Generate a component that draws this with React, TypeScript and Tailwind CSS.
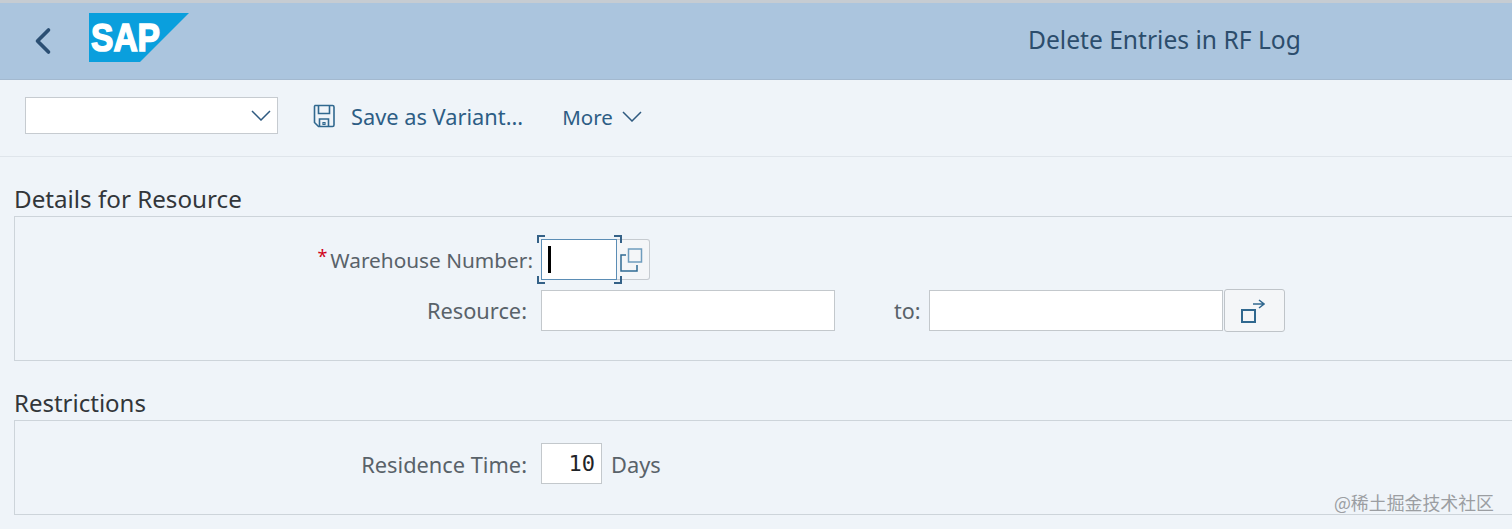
import { ChevronLeft } from 'lucide-react';

const FONT = "font-['Noto_Sans','Liberation_Sans',sans-serif]";

function SapLogo() {
  return (
    <svg width="100" height="49" viewBox="0 0 100 49" aria-label="SAP">
      <polygon points="0,0 100,0 51,49 0,49" fill="#0a9fdd" />
      <text
        x="2"
        y="38"
        fill="#fff"
        stroke="#fff"
        strokeWidth="1.600"
        fontFamily="'Liberation Sans', sans-serif"
        fontWeight="700"
        fontSize="39"
        textLength="69"
        lengthAdjust="spacingAndGlyphs"
      >
        SAP
      </text>
    </svg>
  );
}

function Chevron() {
  return (
    <svg width="20" height="11" viewBox="0 0 20 11" fill="none" stroke="#2f5a80" strokeWidth="1.500">
      <path d="M1 1l9 9 9-9" />
    </svg>
  );
}

function SaveIcon() {
  return (
    <svg width="24" height="24" viewBox="0 0 24 24" fill="none" stroke="#30688f" strokeWidth="1.600">
      <path d="M3.500 1.500h17a1.500 1.500 0 0 1 1.500 1.500v18a1.500 1.500 0 0 1-1.500 1.500h-14l-4-4v-15.500a1.500 1.500 0 0 1 .5-1.500z" />
      <path d="M6.500 1.500v8h11v-8" />
      <path d="M7.500 22.500v-7.500h9v7.500" />
      <path d="M11 18.500h2v2h-2z" strokeWidth="1.200" />
    </svg>
  );
}

function CopyIcon() {
  return (
    <svg width="24" height="24" viewBox="0 0 24 24" fill="none" strokeWidth="1.500">
      <path d="M8.500 1h13v13h-13z" stroke="#6f9dbd" />
      <path d="M6 7H1v16h16v-6" stroke="#2f6b93" />
    </svg>
  );
}

function MultiSelectIcon() {
  return (
    <svg width="24" height="24" viewBox="0 0 24 24" fill="none">
      <path d="M1 11h13v12H1z" stroke="#30688f" strokeWidth="2" />
      <path d="M12 5h11M18 1l5 4-5 4" stroke="#30688f" strokeWidth="1.500" />
    </svg>
  );
}

function Corners() {
  return (
    <>
      <span className="absolute -left-[5px] -top-[5px] h-2 w-2 border-l-2 border-t-2 border-[#346187]" />
      <span className="absolute -right-[6px] -top-[5px] h-2 w-2 border-r-2 border-t-2 border-[#346187]" />
      <span className="absolute -bottom-[5px] -left-[5px] h-2 w-2 border-b-2 border-l-2 border-[#346187]" />
      <span className="absolute -bottom-[5px] -right-[6px] h-2 w-2 border-b-2 border-r-2 border-[#346187]" />
    </>
  );
}

export default function App() {
  return (
    <div className={`relative h-[529px] w-[1512px] overflow-hidden bg-[#eff4f9] ${FONT}`}>
      {/* Shell header */}
      <header className="flex h-[80px] items-center border-t-[3px] border-b border-t-[#c6ccd2] border-b-[#a3b9cf] bg-[#abc5de]">
        <div className="flex w-[89px] justify-center">
          <ChevronLeft className="ml-[-3px] size-[44px] text-[#2b4f73]" strokeWidth={2} />
        </div>
        <div className="mt-[-7px]">
          <SapLogo />
        </div>
        <h1 className="ml-[839px] mt-[-2px] text-[24.600px] leading-8 text-[#2c4d6c]">Delete Entries in RF Log</h1>
      </header>

      {/* Toolbar */}
      <div className="flex h-[77px] items-center border-b border-[#dfe5eb] pb-[5px] pl-[25px]">
        <div className="flex h-[37px] w-[253px] items-center justify-end border border-[#c6cbd0] bg-white pr-[6px]">
          <Chevron />
        </div>
        <div className="ml-[34px]">
          <SaveIcon />
        </div>
        <span className="ml-[15px] mt-[4px] text-[21.800px] text-[#2d5d85]">Save as Variant...</span>
        <span className="ml-[39px] mt-[4px] text-[20.500px] text-[#2d5d85]">More</span>
        <div className="ml-[9px] mt-[1px]">
          <Chevron />
        </div>
      </div>

      {/* Details for Resource */}
      <section className="pl-[14px]">
        <h2 className="mt-[25px] h-[34px] text-[24.200px] leading-[34px] text-[#32363a]">Details for Resource</h2>
        <div className="h-[145px] border border-r-0 border-[#cdd4da] pt-[22px]">
          <div className="flex h-[41px] items-center">
            <span className="mt-[3px] w-[518px] text-right text-[20.800px] text-[#596269]">
              <span className="relative top-[-5px] mr-[3px] text-[18px] text-[#d0021b]">*</span>Warehouse Number:
            </span>
            <div className="relative ml-[8px] flex h-[41px] w-[76px] items-center border border-[#5b8db5] bg-white pl-[6px]">
              <Corners />
              <span className="h-[27px] w-[3px] bg-black" />
            </div>
            <div className="flex h-[41px] w-[33px] items-center justify-start rounded-r-[3px] border border-l-0 border-[#c6cbd0] bg-[#f4f6f8] pl-[3px]">
              <CopyIcon />
            </div>
          </div>
          <div className="mt-[9px] flex items-center">
            <span className="mt-[2px] w-[512px] text-right text-[21.800px] text-[#596269]">Resource:</span>
            <div className="ml-[14px] h-[41px] w-[294px] border border-[#c3c8cc] bg-white" />
            <span className="ml-[59px] mt-[2px] w-[26px] text-[21.500px] text-[#596269]">to:</span>
            <div className="ml-[9px] h-[41px] w-[294px] border border-[#c3c8cc] bg-white" />
            <div className="ml-[1px] flex h-[43px] w-[61px] items-center justify-center rounded-[3px] border border-[#bfc4c9] bg-[#f4f6f8] pr-[3px]">
              <MultiSelectIcon />
            </div>
          </div>
        </div>
      </section>

      {/* Restrictions */}
      <section className="pl-[14px]">
        <h2 className="mt-[25px] h-[34px] text-[24px] leading-[34px] text-[#32363a]">Restrictions</h2>
        <div className="flex h-[95px] items-start border border-r-0 border-[#cdd4da] pt-[22px]">
          <span className="mt-[1px] h-[41px] w-[512px] text-right text-[21.800px] leading-[41px] text-[#596269]">Residence Time:</span>
          <div className="ml-[14px] flex h-[41px] w-[61px] items-center justify-end border border-[#c3c8cc] bg-white pr-[6px] font-['DejaVu_Sans_Mono',monospace] text-[22px] text-[#1f2428]">
            10
          </div>
          <span className="ml-[9px] mt-[1px] text-[21.800px] leading-[41px] text-[#596269]">Days</span>
        </div>
      </section>

      {/* Watermark */}
      <span className="absolute right-[18px] top-[490px] font-['Noto_Sans_CJK_SC',sans-serif] text-[17.900px] leading-6 text-[#9b9ea2]">
        @稀土掘金技术社区
      </span>
    </div>
  );
}
